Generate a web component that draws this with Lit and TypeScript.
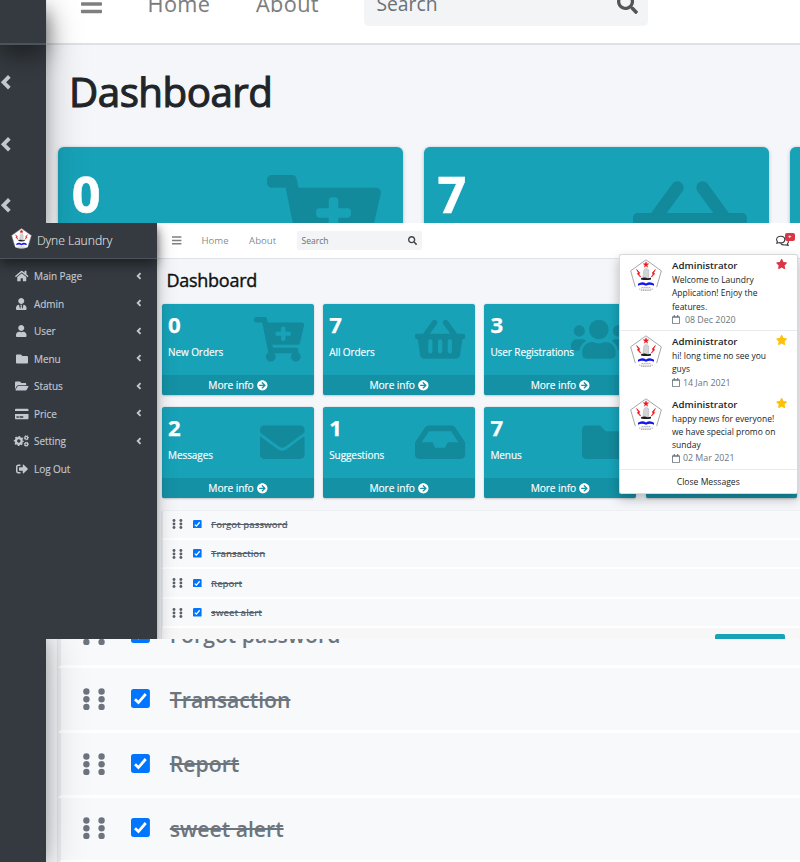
import { LitElement, html, css, svg } from "lit";
import { customElement, property } from "lit/decorators.js";

type Glyph = { w: number; body: unknown };

const solid = (w: number, d: string): Glyph => ({ w, body: svg`<path fill="currentColor" d=${d}></path>` });

const gear = (cx: number, cy: number, r: number, stroke: number, tooth: number) => svg`
  <circle cx=${cx} cy=${cy} r=${r} fill="none" stroke="currentColor" stroke-width=${stroke}></circle>
  <circle cx=${cx} cy=${cy} r=${r + stroke / 2} fill="none" stroke="currentColor" stroke-width=${tooth}
    pathLength="16" stroke-dasharray="1 1" stroke-dashoffset="0.5"></circle>`;

const icons: Record<string, Glyph> = {
  cart: solid(576, "M504.717 320H211.572l6.545 32h268.418c15.401 0 26.816 14.301 23.403 29.319l-5.517 24.276C523.112 414.668 536 433.828 536 456c0 31.202-25.519 56.444-56.824 55.994-29.823-.429-54.35-24.631-55.155-54.447-.44-16.287 6.085-31.049 16.803-41.548H231.176C241.553 426.165 248 440.326 248 456c0 31.813-26.528 57.431-58.67 55.938-28.54-1.325-51.751-24.385-53.251-52.917-1.158-22.034 10.436-41.455 28.051-51.586L93.883 64H24C10.745 64 0 53.255 0 40V24C0 10.745 10.745 0 24 0h102.529c11.401 0 21.228 8.021 23.513 19.19L159.208 64H551.99c15.401 0 26.816 14.301 23.403 29.319l-47.273 208C525.637 312.246 515.923 320 504.717 320zM408 168h-48v-40c0-8.837-7.163-16-16-16h-16c-8.837 0-16 7.163-16 16v40h-48c-8.837 0-16 7.163-16 16v16c0 8.837 7.163 16 16 16h48v40c0 8.837 7.163 16 16 16h16c8.837 0 16-7.163 16-16v-40h48c8.837 0 16-7.163 16-16v-16c0-8.837-7.163-16-16-16z"),
  basket: solid(576, "M576 216v16c0 13.255-10.745 24-24 24h-8l-26.113 182.788C514.509 462.435 494.257 480 470.37 480H105.63c-23.887 0-44.139-17.565-47.518-41.212L32 256h-8c-13.255 0-24-10.745-24-24v-16c0-13.255 10.745-24 24-24h67.341l106.78-146.821c10.395-14.292 30.407-17.453 44.701-7.058 14.293 10.395 17.453 30.408 7.058 44.701L170.477 192h235.046L326.12 82.821c-10.395-14.292-7.234-34.306 7.059-44.701 14.291-10.395 34.306-7.235 44.701 7.058L484.659 192H552c13.255 0 24 10.745 24 24zM312 392V280c0-13.255-10.745-24-24-24s-24 10.745-24 24v112c0 13.255 10.745 24 24 24s24-10.745 24-24zm112 0V280c0-13.255-10.745-24-24-24s-24 10.745-24 24v112c0 13.255 10.745 24 24 24s24-10.745 24-24zm-224 0V280c0-13.255-10.745-24-24-24s-24 10.745-24 24v112c0 13.255 10.745 24 24 24s24-10.745 24-24z"),
  users: solid(640, "M96 224c35.3 0 64-28.7 64-64s-28.7-64-64-64-64 28.7-64 64 28.7 64 64 64zm448 0c35.3 0 64-28.7 64-64s-28.7-64-64-64-64 28.7-64 64 28.7 64 64 64zm32 32h-64c-17.6 0-33.5 7.1-45.1 18.6 40.3 22.1 68.9 62 75.1 109.4h66c17.7 0 32-14.3 32-32v-32c0-35.3-28.7-64-64-64zm-256 0c61.9 0 112-50.1 112-112S381.9 32 320 32 208 82.1 208 144s50.1 112 112 112zm76.8 32h-8.3c-20.8 10-43.9 16-68.5 16s-47.6-6-68.5-16h-8.3C179.6 288 128 339.6 128 403.2V432c0 26.5 21.5 48 48 48h288c26.5 0 48-21.5 48-48v-28.8c0-63.6-51.6-115.2-115.2-115.2zm-223.7-13.4C161.5 263.1 145.6 256 128 256H64c-35.3 0-64 28.7-64 64v32c0 17.7 14.3 32 32 32h65.9c6.3-47.4 34.9-87.3 75.2-109.4z"),
  envelope: solid(512, "M502.3 190.8c3.9-3.1 9.7-.2 9.7 4.7V400c0 26.5-21.5 48-48 48H48c-26.5 0-48-21.5-48-48V195.6c0-5 5.7-7.8 9.7-4.7 22.4 17.4 52.1 39.5 154.1 113.6 21.1 15.4 56.7 47.8 92.2 47.6 35.7.3 72-32.8 92.3-47.6 102-74.1 131.6-96.3 154-113.7zM256 320c23.2.4 56.6-29.2 73.4-41.4 132.7-96.3 142.8-104.7 173.4-128.7 5.8-4.5 9.2-11.5 9.2-18.9v-19c0-26.5-21.5-48-48-48H48c-26.5 0-48 21.5-48 48v19c0 7.4 3.4 14.3 9.2 18.9 30.6 23.9 40.7 32.4 173.4 128.7 16.8 12.2 50.2 41.8 73.4 41.4z"),
  inbox: solid(576, "M567.938 243.908L462.25 85.374A48.003 48.003 0 0 0 422.311 64H153.689a48 48 0 0 0-39.938 21.374L8.062 243.908A47.994 47.994 0 0 0 0 270.533V400c0 26.51 21.49 48 48 48h480c26.51 0 48-21.49 48-48V270.533a47.994 47.994 0 0 0-8.062-26.625zM162.252 128h251.497l85.333 128H376l-32 64H232l-32-64H76.918l85.334-128z"),
  folder: solid(512, "M464 128H272l-64-64H48C21.49 64 0 85.49 0 112v288c0 26.51 21.49 48 48 48h416c26.51 0 48-21.49 48-48V176c0-26.51-21.49-48-48-48z"),
  folderOpen: solid(576, "M572.694 292.093L500.27 416.248A63.997 63.997 0 0 1 444.989 448H45.025c-18.523 0-30.064-20.093-20.731-36.093l72.424-124.155A64 64 0 0 1 152 256h399.964c18.523 0 30.064 20.093 20.73 36.093zM152 224h328v-48c0-26.51-21.49-48-48-48H272l-64-64H48C21.49 64 0 85.49 0 112v278.046l69.077-118.418C86.214 242.25 117.989 224 152 224z"),
  arrow: solid(512, "M256 8c137 0 248 111 248 248S393 504 256 504 8 393 8 256 119 8 256 8zm-28.9 143.6l75.5 72.4H120c-13.3 0-24 10.7-24 24v16c0 13.3 10.7 24 24 24h182.6l-75.5 72.4c-9.7 9.3-9.9 24.8-.4 34.3l11 10.9c9.4 9.4 24.6 9.4 33.9 0L404.3 273c9.4-9.4 9.4-24.6 0-33.9L271.6 106.3c-9.4-9.4-24.6-9.4-33.9 0l-11 10.9c-9.5 9.6-9.3 25.1.4 34.4z"),
  bars: solid(448, "M16 132h416c9 0 16-7 16-16V76c0-9-7-16-16-16H16C7 60 0 67 0 76v40c0 9 7 16 16 16zM16 292h416c9 0 16-7 16-16v-40c0-9-7-16-16-16H16c-9 0-16 7-16 16v40c0 9 7 16 16 16zM16 452h416c9 0 16-7 16-16v-40c0-9-7-16-16-16H16c-9 0-16 7-16 16v40c0 9 7 16 16 16z"),
  search: solid(512, "M505 442.7L405.3 343c-4.5-4.5-10.6-7-17-7H372c27.6-35.3 44-79.7 44-128C416 93.1 322.9 0 208 0S0 93.1 0 208s93.1 208 208 208c48.3 0 92.7-16.4 128-44v16.3c0 6.4 2.5 12.5 7 17l99.7 99.7c9.4 9.4 24.6 9.4 33.9 0l28.3-28.3c9.4-9.4 9.4-24.6.1-34zM208 336c-70.7 0-128-57.2-128-128 0-70.7 57.2-128 128-128 70.7 0 128 57.2 128 128 0 70.7-57.2 128-128 128z"),
  home: solid(576, "M280.37 148.26L96 300.11V464a16 16 0 0 0 16 16l112.06-.29a16 16 0 0 0 15.92-16V368a16 16 0 0 1 16-16h64a16 16 0 0 1 16 16v95.64a16 16 0 0 0 16 16.05L464 480a16 16 0 0 0 16-16V300L295.67 148.26a12.19 12.19 0 0 0-15.3 0zM571.6 251.47L488 182.56V44.05a12 12 0 0 0-12-12h-56a12 12 0 0 0-12 12v72.61L318.47 43a48 48 0 0 0-61 0L4.34 251.47a12 12 0 0 0-1.6 16.9l25.5 31A12 12 0 0 0 45.15 301l235.22-193.74a12.19 12.19 0 0 1 15.3 0L530.9 301a12 12 0 0 0 16.9-1.6l25.5-31a12 12 0 0 0-1.7-16.93z"),
  user: solid(448, "M224 256c70.7 0 128-57.3 128-128S294.7 0 224 0 96 57.3 96 128s57.3 128 128 128zm89.6 32h-16.7c-22.2 10.2-46.9 16-72.9 16s-50.6-5.8-72.9-16h-16.7C60.2 288 0 348.2 0 422.4V464c0 26.5 21.5 48 48 48h352c26.5 0 48-21.5 48-48v-41.6c0-74.2-60.2-134.4-134.4-134.4z"),
  userTie: solid(448, "M224 256c70.7 0 128-57.3 128-128S294.7 0 224 0 96 57.3 96 128s57.3 128 128 128zm95.8 32.6L272 480l-32-136 32-56h-96l32 56-32 136-47.8-191.4C56.9 292 0 350.3 0 422.4V464c0 26.5 21.5 48 48 48h352c26.5 0 48-21.5 48-48v-41.6c0-72.1-56.9-130.4-128.2-133.8z"),
  card: solid(576, "M0 432c0 26.5 21.5 48 48 48h480c26.5 0 48-21.5 48-48V256H0v176zm192-68c0-6.6 5.4-12 12-12h136c6.6 0 12 5.4 12 12v40c0 6.6-5.4 12-12 12H204c-6.6 0-12-5.4-12-12v-40zm-128 0c0-6.6 5.4-12 12-12h72c6.6 0 12 5.4 12 12v40c0 6.6-5.4 12-12 12H76c-6.6 0-12-5.4-12-12v-40zM576 80v48H0V80c0-26.5 21.5-48 48-48h480c26.5 0 48 21.5 48 48z"),
  cogs: { w: 640, body: svg`${gear(205, 256, 122, 94, 90)}${gear(525, 120, 60, 50, 48)}${gear(525, 395, 60, 50, 48)}` },
  logout: solid(512, "M497 273L329 441c-15 15-41 4.5-41-17v-96H152c-13.3 0-24-10.7-24-24v-96c0-13.3 10.7-24 24-24h136V88c0-21.4 25.9-32 41-17l168 168c9.3 9.4 9.3 24.6 0 34zM192 436v-40c0-6.6-5.4-12-12-12H96c-17.7 0-32-14.3-32-32V160c0-17.7 14.3-32 32-32h84c6.6 0 12-5.4 12-12V76c0-6.6-5.4-12-12-12H96c-53 0-96 43-96 96v192c0 53 43 96 96 96h84c6.6 0 12-5.4 12-12z"),
  star: solid(576, "M259.3 17.8L194 150.2 47.9 171.5c-26.2 3.8-36.7 36.1-17.7 54.6l105.7 103-25 145.5c-4.5 26.3 23.2 46 46.4 33.7L288 439.6l130.7 68.7c23.2 12.2 50.9-7.4 46.4-33.7l-25-145.5 105.7-103c19-18.5 8.5-50.8-17.7-54.6L382 150.2 316.7 17.8c-11.7-23.6-45.6-23.9-57.4 0z"),
  calendar: solid(448, "M400 64h-48V12c0-6.6-5.4-12-12-12h-40c-6.6 0-12 5.4-12 12v52H160V12c0-6.6-5.4-12-12-12h-40c-6.6 0-12 5.4-12 12v52H48C21.5 64 0 85.5 0 112v352c0 26.5 21.5 48 48 48h352c26.5 0 48-21.5 48-48V112c0-26.5-21.5-48-48-48zm-6 400H54c-3.3 0-6-2.7-6-6V160h352v298c0 3.3-2.7 6-6 6z"),
  chevron: { w: 384, body: svg`<path d="M290 76L110 256L290 436" fill="none" stroke="currentColor" stroke-width="118"></path>` },
  comments: {
    w: 576,
    body: svg`<g fill="none" stroke="currentColor" stroke-width="48" stroke-linejoin="round">
      <path d="M208 56C108 56 26 120 26 202c0 34 15 66 38 91-4 36-22 56-38 78 42 0 76-14 102-32 25 8 52 12 80 12 100 0 182-64 182-149S308 56 208 56z"></path>
      <path d="M440 170c66 20 110 70 110 128 0 34-15 66-38 91 4 36 22 56 38 78-42 0-76-14-102-32-25 8-52 12-80 12-74 0-130-30-160-76"></path></g>`,
  },
};

const family = css`"Open Sans", "Noto Sans", sans-serif`;

@customElement("ui-icon")
class UiIcon extends LitElement {
  @property() name = "star";
  static styles = css`
    :host { display: inline-flex; flex: none; height: 1em; }
    svg { display: block; height: 100%; width: auto; overflow: visible; }
  `;
  render() {
    const icon = icons[this.name];
    return html`<svg viewBox="0 0 ${icon.w} 512">${icon.body}</svg>`;
  }
}

@customElement("laundry-logo")
class LaundryLogo extends LitElement {
  static styles = css`
    :host { display: block; flex: none; }
    svg { display: block; width: 100%; height: 100%; }
  `;
  render() {
    return html`<svg viewBox="0 0 96 98">
      <path d="M48 2L94 35L77 90Q48 101 19 90L2 35Z" fill="#fff"></path>
      <path d="M16 84L2 35L48 2L94 35L80 84" fill="none" stroke="#8d9094" stroke-width="2.4"></path>
      <path d="M48 8l2 6h6l-5 4 2 6-5-4-5 4 2-6-5-4h6z" fill="#f1141d" stroke="#f1141d" stroke-width="1.5"></path>
      <path d="M20 31l9 10-2 4 5 9-10-10 3-3zM76 31l-9 10 2 4-5 9 10-10-3-3z" fill="#f1141d" stroke="#f1141d" stroke-width="2"></path>
      <path d="M39 56l2-20q1-8 8-9l7 5v24z" fill="#d3d4d6" stroke="#aaadb0" stroke-width="1.5"></path>
      <path d="M33 57q10-4 20 0l10-1v5q-15 3-30 0z" fill="#1d1d1d"></path>
      <path d="M24 74q12-9 24-1q12-8 24 1v6q-12-7-24 0q-12-7-24 0z" fill="#1415ef"></path>
      <path d="M35 85h26M27 90h42M33 94h30" stroke="#8c9095" stroke-width="2" stroke-dasharray="4 1.5"></path>
    </svg>`;
  }
}

@customElement("stat-card")
class StatCard extends LitElement {
  @property() value = "";
  @property() label = "";
  @property() icon = "";
  static styles = css`
    :host {
      display: flex; flex-direction: column; position: relative; box-sizing: border-box;
      width: calc(151.7px * var(--k, 1)); height: calc(90.6px * var(--k, 1)); flex: none; overflow: hidden;
      border-radius: calc(2.6px * var(--k, 1)); background: #17a2b8; color: #fff; font-family: ${family};
      box-shadow: 0 0 calc(0.7px * var(--k, 1)) rgba(0, 0, 0, 0.13), 0 calc(0.7px * var(--k, 1)) calc(2px * var(--k, 1)) rgba(0, 0, 0, 0.2);
    }
    .body { flex: 1; padding: 0 calc(6px * var(--k, 1)); }
    .value { font-weight: 700; font-size: calc(22.2px * var(--k, 1)); line-height: calc(41px * var(--k, 1)); -webkit-text-stroke: calc(0.25px * var(--k, 1)) #fff; }
    .label { font-size: 10px; line-height: 14px; white-space: nowrap; letter-spacing: -0.08px; -webkit-text-stroke: 0.15px #fff; }
    .icon { position: absolute; right: calc(9.4px * var(--k, 1)); top: calc(12.6px * var(--k, 1)); font-size: calc(44.6px * var(--k, 1)); color: rgba(0, 0, 0, 0.15); }
    .more { display: flex; align-items: center; justify-content: center; gap: 3px; height: calc(19.3px * var(--k, 1)); background: rgba(0, 0, 0, 0.1); font-size: 10.2px; letter-spacing: -0.1px; -webkit-text-stroke: 0.15px #fff; }
    .more ui-icon { font-size: 10.7px; }
  `;
  render() {
    return html`<div class="body"><div class="value">${this.value}</div><div class="label">${this.label}</div></div>
      ${this.icon ? html`<ui-icon class="icon" name=${this.icon}></ui-icon>` : ""}
      <div class="more">${this.label ? html`<span>More info</span><ui-icon name="arrow"></ui-icon>` : ""}</div>`;
  }
}

@customElement("todo-row")
class TodoRow extends LitElement {
  @property() label = "";
  static styles = css`
    :host {
      display: flex; align-items: center; box-sizing: border-box; height: var(--row-h);
      background: #f8f9fa; border-left: var(--edge) solid #e9ecef; border-bottom: var(--sep) solid #fff;
      padding-left: calc(9.4px * var(--m)); font-family: ${family};
    }
    .grip { width: calc(11px * var(--m)); height: calc(12px * var(--m)); flex: none; color: var(--ink); }
    .box { width: calc(8.6px * var(--m)); height: calc(8.6px * var(--m)); margin: 0 0 calc(0.6px * var(--m)) var(--box-gap); flex: none; }
    .label { margin-left: calc(9.1px * var(--m)); font-size: var(--fs); font-weight: 600; letter-spacing: var(--ls); color: var(--ink); text-decoration: line-through; white-space: nowrap; }
  `;
  render() {
    return html`<svg class="grip" viewBox="0 0 11 12">
        ${[2.5, 6, 9.5].map((y) => svg`<circle cx="2" cy=${y} r="1.45" fill="currentColor"></circle><circle cx="8.9" cy=${y} r="1.45" fill="currentColor"></circle>`)}
      </svg>
      <svg class="box" viewBox="0 0 19 19"><rect width="19" height="19" rx="2.6" fill="#0075ff"></rect>
        <path d="M4 10.2L7.5 13.6L14.8 5" fill="none" stroke="#fff" stroke-width="2.8"></path></svg>
      <span class="label">${this.label}</span>`;
  }
}

@customElement("message-item")
class MessageItem extends LitElement {
  @property({ type: Array }) lines: string[] = [];
  @property() date = "";
  @property() tone = "gold";
  static styles = css`
    :host { display: flex; font-family: ${family}; color: #212529; font-size: 8.5px; line-height: 13.2px; }
    .avatar { width: 32px; height: 33px; margin: 4px 10px 0 0; }
    .text { flex: 1; white-space: nowrap; }
    .name { display: flex; justify-content: space-between; height: 14px; font-size: 9.7px; font-weight: 600; line-height: 14px; margin-top: 4px; }
    .star { font-size: 10px; margin-right: 9.5px; }
    .gold { color: #ffc107; }
    .red { color: #dc3545; }
    .line { height: 13.3px; }
    .date { display: flex; align-items: center; gap: 3px; height: 13.3px; color: #6c757d; font-size: 8.9px; }
    .wide { gap: 5px; }
    .date ui-icon { font-size: 9px; }
  `;
  render() {
    return html`<laundry-logo class="avatar"></laundry-logo>
      <div class="text">
        <div class="name"><span>Administrator</span><ui-icon class="star ${this.tone}" name="star"></ui-icon></div>
        ${this.lines.map((l) => html`<div class="line">${l}</div>`)}
        <div class="date ${this.tone === "red" ? "wide" : ""}"><ui-icon name="calendar"></ui-icon><span>${this.date}</span></div>
      </div>`;
  }
}

const nav = [
  ["home", "Main Page"], ["userTie", "Admin"], ["user", "User"], ["folder", "Menu"],
  ["folderOpen", "Status"], ["card", "Price"], ["cogs", "Setting"], ["logout", "Log Out"],
];

const stats = [
  ["0", "New Orders", "cart"], ["7", "All Orders", "basket"], ["3", "User Registrations", "users"], ["", "", ""],
  ["2", "Messages", "envelope"], ["1", "Suggestions", "inbox"], ["7", "Menus", "folder"], ["", "", ""],
];

const todos = ["Forgot password", "Transaction", "Report", "sweet alert"];

const messages = [
  { tone: "red", date: "08 Dec 2020", lines: ["Welcome to Laundry", "Application! Enjoy the", "features."] },
  { tone: "gold", date: "14 Jan 2021", lines: ["hi! long time no see you", "guys"] },
  { tone: "gold", date: "02 Mar 2021", lines: ["happy news for everyone!", "we have special promo on", "sunday"] },
];

@customElement("app-root")
class AppRoot extends LitElement {
  static styles = css`
    :host { display: flex; flex-direction: column; width: 800px; height: 862px; overflow: hidden; font-family: ${family}; background: #f4f6f9; color: #212529; }
    * { box-sizing: border-box; }
    .band { display: flex; flex: none; overflow: hidden; background: #f4f6f9; }
    .large { height: 223px; }
    .front { height: 416px; position: relative; }
    .side { flex: none; position: relative; z-index: 2; background: #343a40; color: #c2c7d0; }
    .large .side { width: 46px; margin-right: 0.5px; box-shadow: 0 20px 40px rgba(0, 0, 0, 0.25), 0 14px 14px rgba(0, 0, 0, 0.22); }
    .large.end .side { box-shadow: 0 0 40px rgba(0, 0, 0, 0.25), 0 0 14px rgba(0, 0, 0, 0.22); }
    .front .side { width: 157px; box-shadow: 0 9px 18px rgba(0, 0, 0, 0.25), 0 6px 6px rgba(0, 0, 0, 0.22); }
    .main { flex: 1; min-width: 0; }
    .bar { display: flex; align-items: center; background: #fff; color: rgba(0, 0, 0, 0.5); }

    .large .cap { height: 44.5px; border-bottom: 2px solid #4b545c; box-shadow: 0 10px 24px rgba(0, 0, 0, 0.45); }
    .large .arrows { display: flex; flex-direction: column; align-items: flex-start; gap: 45px; padding-top: 29.5px; }
    .large .arrows ui-icon { font-size: 16.5px; }
    .large .bar { height: 80.5px; margin-top: -36px; border-bottom: 2px solid #dee2e6; padding: 1px 0 0 34.5px; font-size: 21.7px; }
    .large .bar .menu { font-size: 24px; margin: 0 45.5px 0 0; }
    .large .bar .link { letter-spacing: 0.4px; margin-right: 45.5px; -webkit-text-stroke: 0.3px rgba(0, 0, 0, 0.3); }
    .large .search { display: flex; align-items: center; justify-content: space-between; width: 284px; height: 45px; padding: 0 10px 0 12px; border-radius: 5px; background: #f2f4f6; font-size: 19.3px; color: #6a7078; }
    .large .search ui-icon { font-size: 21px; color: #555; }
    .large h1 { margin: 0; height: 102px; padding-left: 22.5px; font-size: 40.3px; line-height: 93px; font-weight: 500; letter-spacing: -0.5px; -webkit-text-stroke: 1.1px #212529; }
    .large .cards { display: flex; gap: 21.3px; padding-left: 11.5px; --k: 2.272; }

    .brand { display: flex; align-items: center; height: 35.5px; padding: 0 0 0 11px; border-bottom: 1px solid #4b545c; color: rgba(255, 255, 255, 0.8); font-size: 12.2px; font-weight: 300; letter-spacing: -0.05px; -webkit-text-stroke: 0.2px rgba(255, 255, 255, 0.6); box-shadow: 0 5px 11px rgba(0, 0, 0, 0.45); white-space: nowrap; }
    .brand laundry-logo { width: 21px; height: 21px; margin: -3px 5px 0 0; }
    .item { display: flex; align-items: center; height: 27.5px; font-size: 10px; }
    .items { padding-top: 4px; }
    .item .pic { width: 15px; margin: 0 5px 0 14px; display: flex; justify-content: center; font-size: 12px; }
    .item .name { flex: 1; letter-spacing: -0.05px; -webkit-text-stroke: 0.15px #c2c7d0; }
    .item .caret { font-size: 8px; margin: -1px 15px 0 0; }

    .front .bar { height: 35.5px; border-bottom: 1px solid #dee2e6; padding-left: 15px; font-size: 9.6px; }
    .front .bar .menu { font-size: 10.8px; margin-right: 20px; }
    .front .bar .link { margin-right: 20.5px; }
    .front .search { display: flex; align-items: center; justify-content: space-between; width: 125px; height: 19.5px; padding: 0 5px; border-radius: 2px; background: #f2f4f6; font-size: 8.5px; color: #6a7078; }
    .front .search ui-icon { font-size: 9px; color: #444; }
    .talk { position: relative; margin-left: auto; margin-right: 11.5px; color: #343a40; font-size: 11.5px; display: flex; }
    .badge { position: absolute; left: 9.5px; top: -2px; width: 9.5px; height: 8.5px; border-radius: 2px; background: #dc3545; color: #fff; font-size: 6px; line-height: 8px; font-weight: 700; text-align: center; }
    .front h1 { margin: 0; height: 45.5px; padding-left: 9.5px; font-size: 18px; line-height: 42px; font-weight: 500; color: #111; letter-spacing: -0.27px; -webkit-text-stroke: 0.4px #111; }
    .front .cards { display: grid; grid-template-columns: repeat(4, 151.7px); gap: 12.5px 9.5px; padding-left: 5px; }
    .list { --m: 1; --row-h: 29.4px; --edge: 1.5px; --sep: 2px; --fs: 9.5px; --ls: 0px; --box-gap: 10px; --ink: #56606a; margin: 13px 0 0 5px; box-shadow: 0 0 1px rgba(0, 0, 0, 0.13), 0 1px 2px rgba(0, 0, 0, 0.15); }
    .foot { display: flex; justify-content: flex-end; height: 14px; background: #f7f7f7; padding: 6px 15px 0 0; }
    .foot .add { width: 70px; height: 20px; border-radius: 2px; background: #17a2b8; }

    .end .list { --m: 2.2; --row-h: 64.8px; --edge: 3px; --sep: 3px; --fs: 21.2px; --ls: 0px; --box-gap: 25px; --ink: #6c757d; margin: -35.7px 0 0 11.5px; }

    .menu-panel { position: absolute; z-index: 3; left: 619px; top: 31px; width: 178.5px; height: 240px; border: 1px solid rgba(0, 0, 0, 0.15); border-radius: 2.5px; background: #fff; box-shadow: 0 5px 11px rgba(0, 0, 0, 0.25); }
    .menu-panel message-item { padding-left: 10px; }
    .m0 { height: 76px; border-bottom: 1px solid #e9ecef; }
    .m1 { height: 62.5px; }
    .m2 { height: 76.5px; border-bottom: 1px solid #e9ecef; }
    .close { text-align: center; font-size: 8.6px; line-height: 24px; }
  `;

  render() {
    return html`
      <section class="band large">
        <div class="side">
          <div class="cap"></div>
          <div class="arrows">${[0, 1, 2].map(() => html`<ui-icon name="chevron"></ui-icon>`)}</div>
        </div>
        <div class="main">
          <div class="bar">
            <ui-icon class="menu" name="bars"></ui-icon><span class="link">Home</span><span class="link">About</span>
            <div class="search"><span>Search</span><ui-icon name="search"></ui-icon></div>
          </div>
          <h1>Dashboard</h1>
          <div class="cards">
            ${stats.slice(0, 3).map(([v, , i]) => html`<stat-card value=${v} icon=${i}></stat-card>`)}
          </div>
        </div>
      </section>

      <section class="band front">
        <div class="side">
          <div class="brand"><laundry-logo></laundry-logo><span>Dyne Laundry</span></div>
          <div class="items">
            ${nav.map(([icon, name], i) => html`<div class="item">
              <span class="pic"><ui-icon name=${icon}></ui-icon></span><span class="name">${name}</span>
              ${i < nav.length - 1 ? html`<ui-icon class="caret" name="chevron"></ui-icon>` : ""}
            </div>`)}
          </div>
        </div>
        <div class="main">
          <div class="bar">
            <ui-icon class="menu" name="bars"></ui-icon><span class="link">Home</span><span class="link">About</span>
            <div class="search"><span>Search</span><ui-icon name="search"></ui-icon></div>
            <div class="talk"><ui-icon name="comments"></ui-icon><span class="badge">+</span></div>
          </div>
          <h1>Dashboard</h1>
          <div class="cards">
            ${stats.map(([v, l, i]) => html`<stat-card value=${v} label=${l} icon=${i}></stat-card>`)}
          </div>
          <div class="list">
            ${todos.map((t) => html`<todo-row label=${t}></todo-row>`)}
            <div class="foot"><div class="add"></div></div>
          </div>
        </div>
        <div class="menu-panel">
          ${messages.map((m, i) => html`<message-item class="m${i}" .lines=${m.lines} date=${m.date} tone=${m.tone}></message-item>`)}
          <div class="close">Close Messages</div>
        </div>
      </section>

      <section class="band large end">
        <div class="side"></div>
        <div class="main">
          <div class="list">${todos.map((t) => html`<todo-row label=${t}></todo-row>`)}</div>
        </div>
      </section>
    `;
  }
}
